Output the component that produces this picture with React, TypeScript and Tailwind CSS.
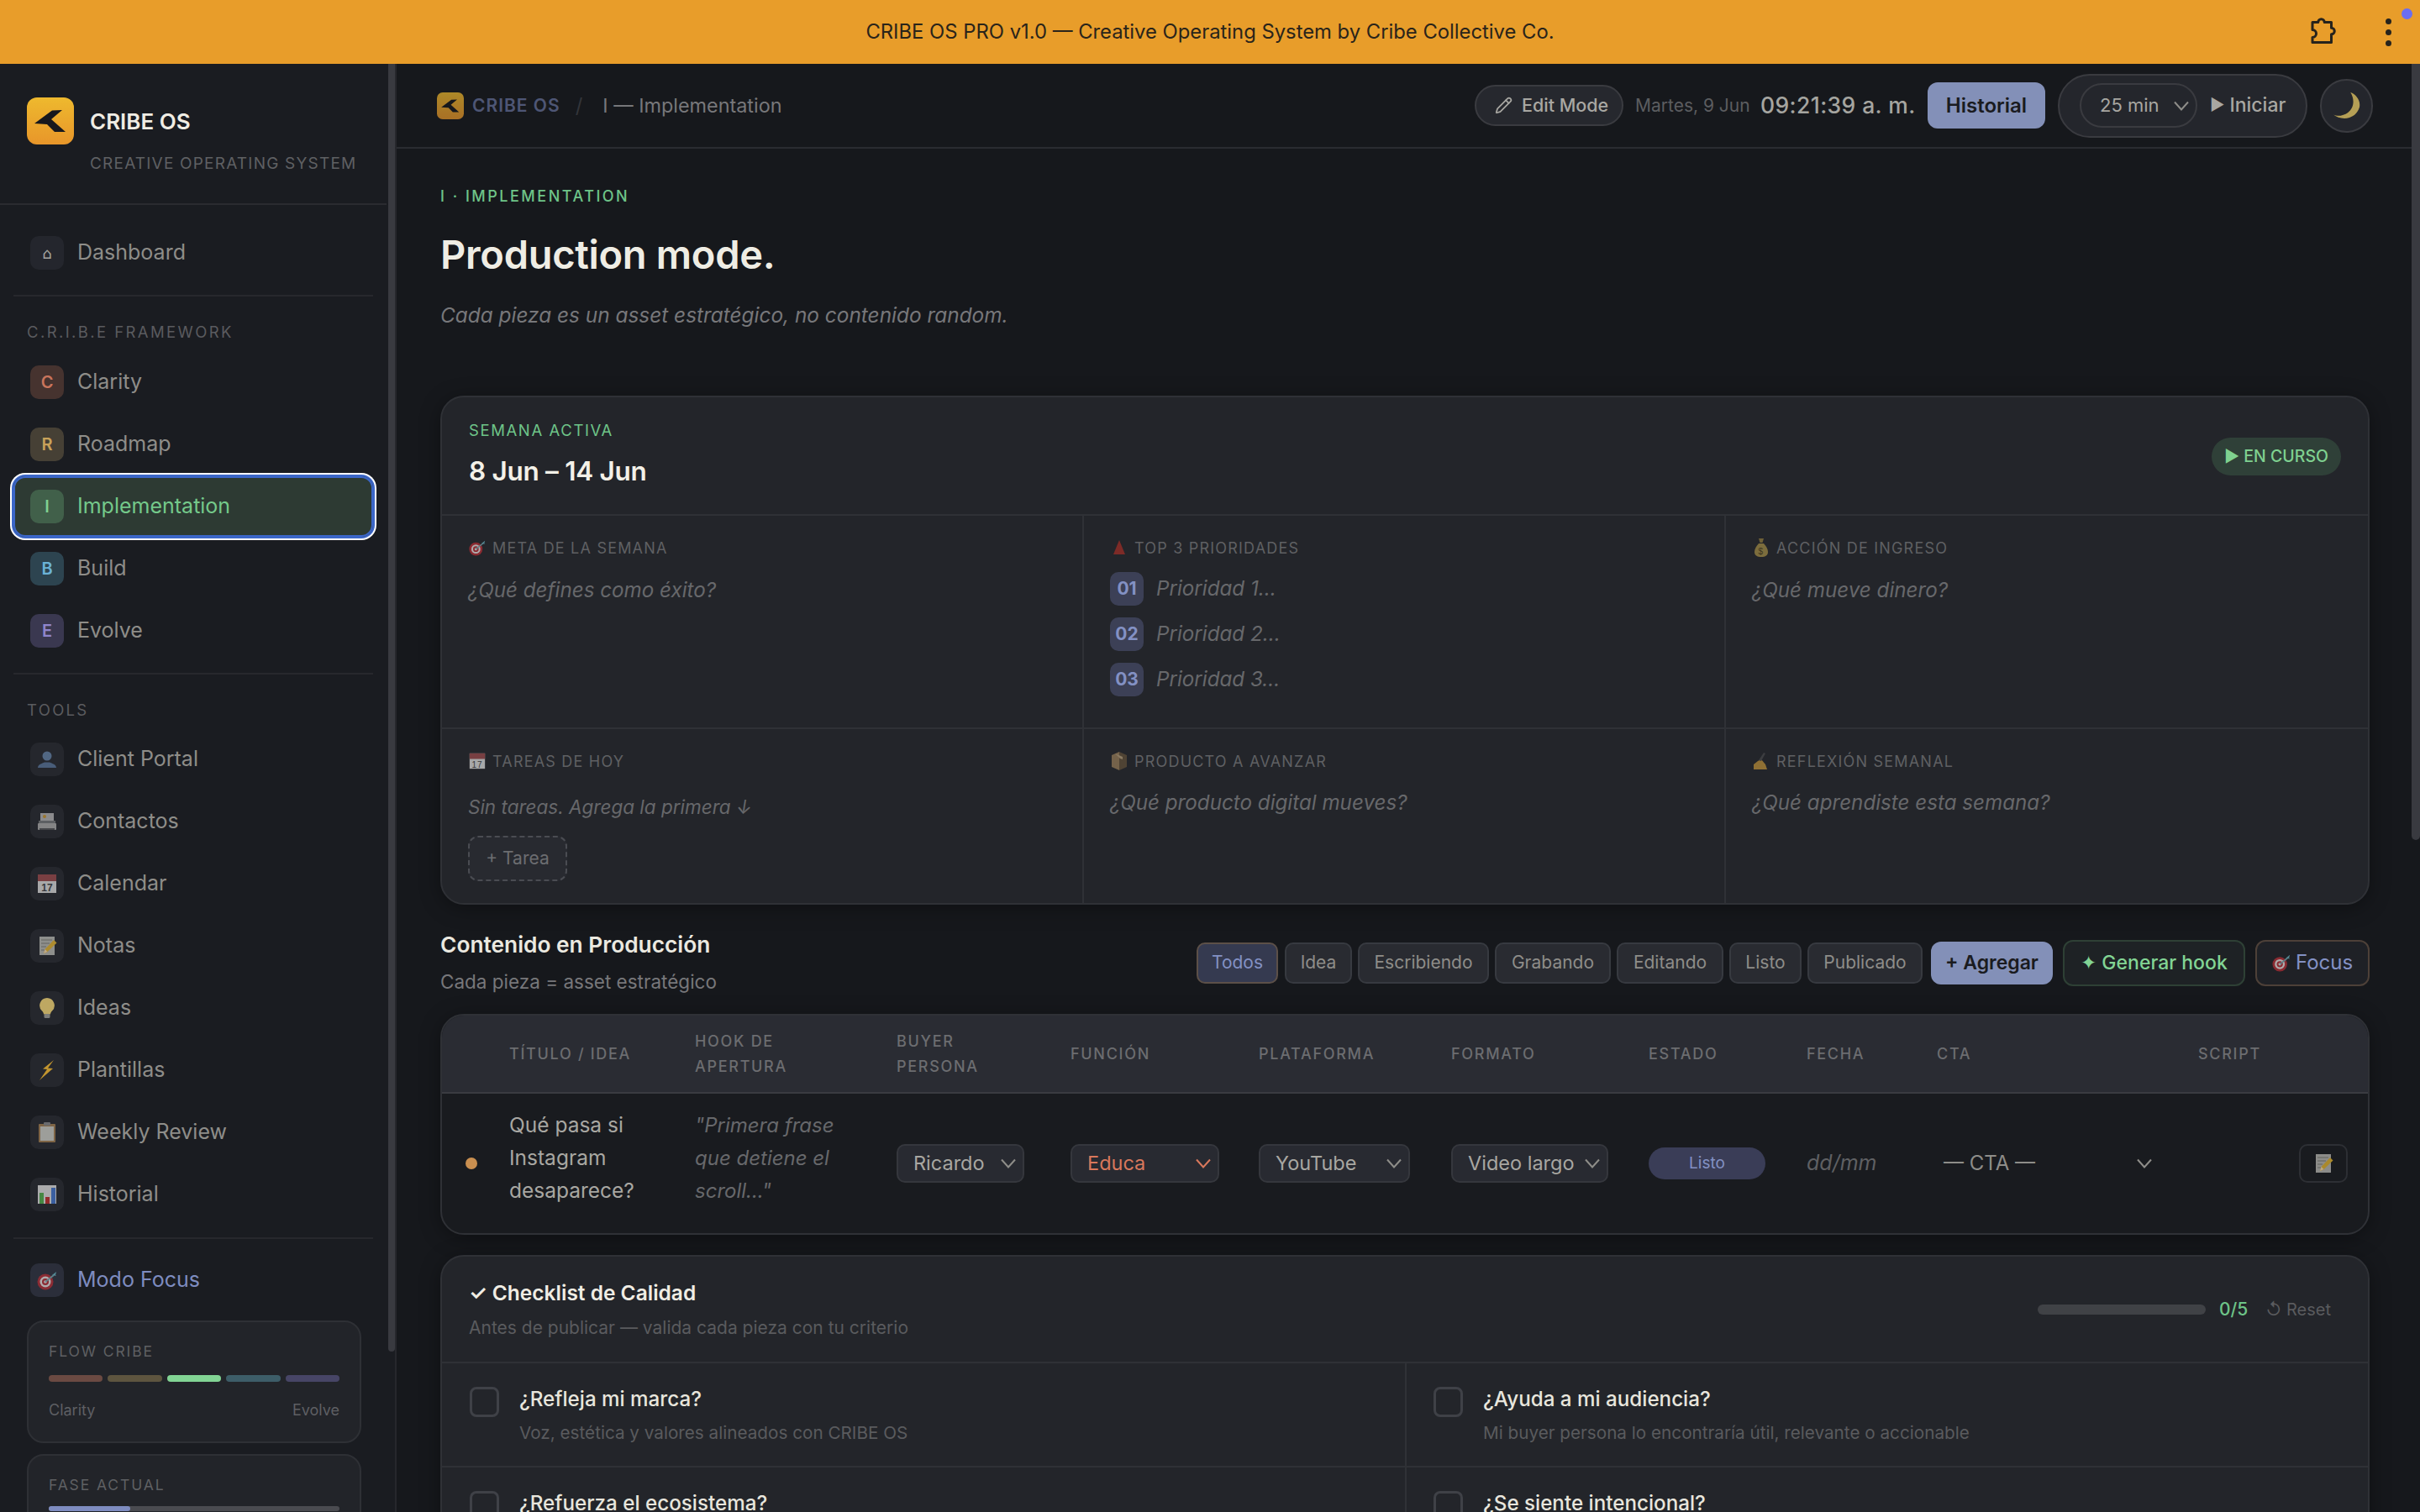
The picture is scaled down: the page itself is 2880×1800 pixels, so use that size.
import React from 'react';
import { Pencil } from 'lucide-react';

// small drawings for the emoji of the original, dimmed like the reference
const Bust = () => (
  <svg width="24" height="24" viewBox="0 0 24 24" className="opacity-80">
    <circle cx="12" cy="8" r="5.5" fill="#5d7799" />
    <path d="M1 22c0-4 5-5 8-6.500h6c3 1.500 8 2.500 8 6.500z" fill="#536b8c" />
  </svg>
);
const CardIndex = () => (
  <svg width="24" height="24" viewBox="0 0 24 24" className="opacity-80">
    <rect x="4" y="2" width="16" height="10" fill="#a5a5a5" />
    <circle cx="9" cy="6" r="2" fill="#b98a2e" />
    <rect x="2" y="11" width="20" height="4" fill="#6c6d70" />
    <rect x="1" y="14" width="22" height="8" rx="1" fill="#9c9c9c" />
    <rect x="3" y="20" width="18" height="2" fill="#4c4d50" />
  </svg>
);
const CalendarIco = ({ s = 24 }: { s?: number }) => (
  <svg width={s} height={s} viewBox="0 0 24 24" className="opacity-80">
    <rect x="1" y="1" width="22" height="22" fill="#c9c9c9" />
    <rect x="1" y="1" width="22" height="8" fill="#8e4648" />
    <text x="12" y="21" fontSize="12" textAnchor="middle" fill="#3c3d40" fontFamily="Liberation Sans">17</text>
  </svg>
);
const Memo = ({ s = 24 }: { s?: number }) => (
  <svg width={s} height={s} viewBox="0 0 24 24" className="opacity-80">
    <rect x="3" y="1" width="18" height="22" fill="#a9a9a4" />
    <path d="M5 5h13M5 9h10M5 13h6M5 17h4" stroke="#74746f" strokeWidth="1" />
    <path d="M8 21l1.500-5L20 5l3.500 3.500L12 19.500z" fill="#cfa52f" />
    <path d="M8 21l1.500-5 3 3z" fill="#e4c9a0" />
  </svg>
);
const Bulb = () => (
  <svg width="24" height="26" viewBox="0 0 24 26" className="opacity-85">
    <path d="M12 1a9 9 0 0 0-6 15.500c1.500 1.500 2 3 2 4h8c0-1 .5-2.500 2-4A9 9 0 0 0 12 1z" fill="#d9bf6c" />
    <rect x="8.500" y="20" width="7" height="5" rx="1.500" fill="#8c8c88" />
  </svg>
);
const Bolt = () => (
  <svg width="24" height="26" viewBox="0 0 24 26">
    <path d="M20 1L7 11.500l5 .5L3 25l16-14-6-.5z" fill="#c2952f" />
  </svg>
);
const Clip = () => (
  <svg width="24" height="26" viewBox="0 0 24 26" className="opacity-85">
    <rect x="2" y="3" width="20" height="22" rx="1" fill="#8e6f4a" />
    <rect x="4" y="6" width="16" height="17" fill="#b3b3ae" />
    <rect x="8" y="1" width="8" height="4" rx="1" fill="#77777a" />
  </svg>
);
const Chart = () => (
  <svg width="24" height="24" viewBox="0 0 24 24" className="opacity-85">
    <rect x="1" y="1" width="22" height="22" fill="#c3c3c3" />
    <rect x="3" y="10" width="5" height="13" fill="#4c9a48" />
    <rect x="10" y="15" width="5" height="8" fill="#a82c2c" />
    <rect x="17" y="4" width="5" height="19" fill="#3f69b5" />
  </svg>
);
const Target = ({ s = 24 }: { s?: number }) => (
  <svg width={s} height={s} viewBox="0 0 24 24" className="opacity-85">
    <circle cx="10" cy="14" r="9.500" fill="#9c2c33" />
    <circle cx="10" cy="14" r="6.500" fill="#c9c2c2" />
    <circle cx="10" cy="14" r="4" fill="#9c2c33" />
    <circle cx="10" cy="14" r="1.800" fill="#c9c2c2" />
    <path d="M10 14L20 6" stroke="#6a8f96" strokeWidth="1.800" />
    <path d="M18 6l5-4-1 4 1 1z" fill="#5c9aa6" />
  </svg>
);
const RedTri = () => (
  <svg width="16" height="20" viewBox="0 0 16 20">
    <path d="M8 1l7 17H1z" fill="#7d2b27" />
  </svg>
);
const Bag = () => (
  <svg width="18" height="24" viewBox="0 0 18 24">
    <path d="M6 1h6l-1.500 5h-3z" fill="#6f6137" />
    <path d="M6 7h6c3 3 5 7 5 10 0 4-3 6-8 6s-8-2-8-6c0-3 2-7 5-10z" fill="#7c6d3d" />
    <text x="9" y="20" fontSize="10" textAnchor="middle" fill="#3a3420" fontFamily="Liberation Sans">$</text>
  </svg>
);
const Box = () => (
  <svg width="22" height="24" viewBox="0 0 22 24">
    <path d="M11 1l9 4v14l-9 4z" fill="#4f4334" />
    <path d="M11 1L2 5v14l9 4z" fill="#74624a" />
    <path d="M6 3l9 4v3l-3-1z" fill="#8a7a62" />
  </svg>
);
const Writing = () => (
  <svg width="22" height="22" viewBox="0 0 22 22">
    <path d="M2 21v-6l5-4 4-2 5 6 2 6z" fill="#8f7034" />
    <path d="M8 10L14 1l2 1-5 9z" fill="#3c3d40" />
  </svg>
);
const Moon = () => (
  <svg width="36" height="36" viewBox="0 0 34 34">
    <path d="M21 2c6 9 4 23-11 26-3 .5-6 0-8-1 7 6 24 7 29-8C33 11 27 4 21 2z" fill="#b59f55" />
  </svg>
);
const Chev = ({ color = '#8e8d89' }: { color?: string }) => (
  <svg width="18" height="12" viewBox="0 0 18 12" fill="none" stroke={color} strokeWidth="2">
    <path d="M1 1.500l8 9 8-9" />
  </svg>
);
const Logo = ({ dim = false }: { dim?: boolean }) => (
  <svg viewBox="0 0 56 56" className={dim ? 'w-full h-full opacity-70' : 'w-full h-full'}>
    <defs>
      <linearGradient id={dim ? 'lgd' : 'lg'} x1="0" y1="0" x2="0" y2="1">
        <stop offset="0" stopColor="#eeb92e" />
        <stop offset="1" stopColor="#e8962a" />
      </linearGradient>
    </defs>
    <rect width="56" height="56" rx="12" fill={`url(#${dim ? 'lgd' : 'lg'})`} />
    <path d="M9 31L30 15.500 42 15 29 26 46 41 33 41 24 32z" fill="#17181d" />
  </svg>
);

const framework = [
  { l: 'C', name: 'Clarity', box: 'bg-[#46332f] text-[#c9755c]' },
  { l: 'R', name: 'Roadmap', box: 'bg-[#464035] text-[#c8a25a]' },
  { l: 'I', name: 'Implementation', box: 'bg-[#41604a] text-[#7fd190]', active: true },
  { l: 'B', name: 'Build', box: 'bg-[#2d4450] text-[#6bb2d6]' },
  { l: 'E', name: 'Evolve', box: 'bg-[#3a3850] text-[#8f85cc]' },
];
const tools = [
  { name: 'Client Portal', icon: <Bust /> },
  { name: 'Contactos', icon: <CardIndex /> },
  { name: 'Calendar', icon: <CalendarIco /> },
  { name: 'Notas', icon: <Memo /> },
  { name: 'Ideas', icon: <Bulb /> },
  { name: 'Plantillas', icon: <Bolt /> },
  { name: 'Weekly Review', icon: <Clip /> },
  { name: 'Historial', icon: <Chart /> },
];
const filters = [
  { t: 'Idea', w: 'w-[80px]' },
  { t: 'Escribiendo', w: 'w-[156px]' },
  { t: 'Grabando', w: 'w-[138px]' },
  { t: 'Editando', w: 'w-[127px]' },
  { t: 'Listo', w: 'w-[86px]' },
  { t: 'Publicado', w: 'w-[137px]' },
];

const NavRow = ({ icon, label, box, text, active }: { icon: React.ReactNode; label: string; box: string; text?: string; active?: boolean }) => (
  <div
    className={`h-[72px] mx-4 pl-5 flex items-center gap-4 rounded-[14px] ${
      active ? 'bg-[#2d3a33] shadow-[inset_0_0_0_2px_#3b66c8,0_0_0_2px_#3b66c8,0_0_0_4px_#ffffff]' : ''
    }`}
  >
    <div className={`w-10 h-10 rounded-[10px] flex items-center justify-center text-[20px] font-semibold ${box}`}>{icon}</div>
    <span className={`text-[25px] ${text ?? 'text-[#8e8d89]'}`}>{label}</span>
  </div>
);

const Sidebar = () => (
  <aside className="relative w-[472px] shrink-0 bg-[#1a1c21] border-r-2 border-[#26272c] overflow-hidden">
    {/* scrollbar */}
    <div className="absolute top-0 right-0 w-2 h-[1533px] bg-[#393a40] rounded-b-md" />
    <div className="w-[460px]">
      <div className="h-[168px] pt-10 pl-8 border-b-2 border-[#2a2b30]">
        <div className="flex items-center gap-[19px]">
          <div className="w-14 h-14"><Logo /></div>
          <span className="text-[26px] font-semibold text-[#f0ede4]">CRIBE OS</span>
        </div>
        <div className="ml-[75px] mt-[10px] text-[19px] leading-[26px] tracking-[1.200px] text-[#5f6063]">CREATIVE OPERATING SYSTEM</div>
      </div>
      <div className="mt-[21px]">
        <NavRow icon={<span className="font-['DejaVu_Sans'] text-[18px] font-normal">⌂</span>} label="Dashboard" box="bg-[#24262d] text-[#a5a5a0]" />
      </div>
      <div className="h-[2px] mx-4 mt-[14px] bg-[#27282d]" />
      <div className="pl-8 mt-[30px] mb-[12px] text-[18.500px] leading-[24px] tracking-[2.400px] text-[#5a5b5f]">C.R.I.B.E FRAMEWORK</div>
      <div className="flex flex-col gap-[2px]">
        {framework.map((f) => (
          <NavRow key={f.l} icon={f.l} label={f.name} box={f.box} active={f.active} text={f.active ? 'text-[#74c98a]' : undefined} />
        ))}
      </div>
      <div className="h-[2px] mx-4 mt-[14px] bg-[#27282d]" />
      <div className="pl-8 mt-[30px] mb-[11px] text-[18.500px] leading-[24px] tracking-[2.300px] text-[#5a5b5f]">TOOLS</div>
      <div className="flex flex-col gap-[2px]">
        {tools.map((t) => (
          <NavRow key={t.name} icon={t.icon} label={t.name} box="bg-[#25272d]" />
        ))}
      </div>
      <div className="h-[2px] mx-4 mt-[15px] bg-[#27282d]" />
      <div className="mt-[13px]">
        <NavRow icon={<Target />} label="Modo Focus" box="bg-[#2b2e3a]" text="text-[#7e8cc0]" />
      </div>
      <div className="mx-8 mt-[12px] h-[146px] w-[398px] rounded-[20px] border-2 border-[#2e3035] bg-[#222429] px-[24px] pt-[23px]">
        <div className="text-[17.500px] leading-[24px] tracking-[1.900px] text-[#5f6063]">FLOW CRIBE</div>
        <div className="mt-[16px] flex gap-[6px]">
          <div className="h-2 flex-1 rounded-full bg-[#6b4a42]" />
          <div className="h-2 flex-1 rounded-full bg-[#5e553f]" />
          <div className="h-2 flex-1 rounded-full bg-[#82d494]" />
          <div className="h-2 flex-1 rounded-full bg-[#3d5d68]" />
          <div className="h-2 flex-1 rounded-full bg-[#474566]" />
        </div>
        <div className="mt-[22px] flex justify-between text-[18px] leading-[24px] text-[#5e5f63]">
          <span>Clarity</span>
          <span>Evolve</span>
        </div>
      </div>
      <div className="mx-8 mt-[13px] h-[146px] w-[398px] rounded-[20px] border-2 border-[#2e3035] bg-[#222429] px-[24px] pt-[23px]">
        <div className="text-[17.500px] leading-[24px] tracking-[1.900px] text-[#5f6063]">FASE ACTUAL</div>
        <div className="mt-[13px] h-[6px] rounded-full bg-[#4a4b50]">
          <div className="h-[6px] w-[97px] rounded-full bg-[#7e8cc0]" />
        </div>
      </div>
    </div>
  </aside>
);

const Header = () => (
  <header className="h-[101px] shrink-0 pl-[48px] pr-[56px] flex items-center justify-between border-b-2 border-[#2a2c31]">
    <div className="flex items-center">
      <div className="w-8 h-8"><Logo dim /></div>
      <span className="ml-[10px] text-[21px] font-semibold tracking-[1px] text-[#4e5675]">CRIBE OS</span>
      <span className="ml-[18px] text-[24px] text-[#33353a]">/</span>
      <span className="ml-[24px] text-[23.400px] text-[#77777a]">I — Implementation</span>
    </div>
    <div className="flex items-center">
      <button className="h-[49px] w-[177px] pl-[22px] flex items-center gap-[11px] rounded-full border-2 border-[#3a3b40] bg-[#26282e] text-[21.500px] font-medium text-[#a8a7a2]">
        <Pencil size={21} strokeWidth={2} />
        Edit Mode
      </button>
      <span className="ml-[14px] w-[136px] text-[21px] text-[#5c5d60] whitespace-nowrap">Martes, 9 Jun</span>
      <span className="ml-[13px] w-[183px] text-[26.500px] font-medium tracking-[0.400px] text-[#a5a5a0] whitespace-nowrap">09:21:39 a. m.</span>
      <button className="ml-[16px] h-[55px] w-[140px] rounded-[12px] bg-[#8390b8] text-[24px] font-semibold text-[#1a1b20]">Historial</button>
      <div className="ml-[15px] h-[76px] w-[297px] pl-[24px] flex items-center rounded-full border-2 border-[#3a3b40] bg-[#24262c]">
        <div className="h-[53px] w-[140px] pl-[22px] pr-[8px] flex items-center justify-between rounded-full border-2 border-[#3a3b40] text-[22px] text-[#a8a7a2]">
          25 min
          <Chev />
        </div>
        <span className="ml-[15px] text-[19px] text-[#a8a7a2]">▶</span>
        <span className="ml-[6px] text-[23px] font-medium text-[#a8a7a2]">Iniciar</span>
      </div>
      <div className="ml-[15px] w-[63px] h-[64px] flex items-center justify-center rounded-full border-2 border-[#3a3b40] bg-[#24262c]">
        <Moon />
      </div>
    </div>
  </header>
);

const CellLabel = ({ icon, children }: { icon: React.ReactNode; children: React.ReactNode }) => (
  <div className="h-6 flex items-center gap-[7px] text-[18px] tracking-[1.200px] text-[#5f6063]">
    <span className="w-[22px] flex justify-center">{icon}</span>
    {children}
  </div>
);
const Ph = ({ children }: { children: React.ReactNode }) => (
  <div className="text-[24.200px] leading-[36px] italic text-[#67686b]">{children}</div>
);

const WeekCard = () => (
  <section className="mt-[78px] rounded-[28px] border-2 border-[#2f3136] bg-[#23252a] shadow-[0_4px_24px_rgba(0,0,0,0.35)] overflow-hidden">
    <div className="h-[141px] pl-[32px] pr-[32px] pt-[27px] flex justify-between border-b-2 border-[#2f3136]">
      <div>
        <div className="text-[18.500px] leading-[24px] tracking-[1.600px] text-[#6ec488]">SEMANA ACTIVA</div>
        <div className="mt-[17px] text-[31.500px] leading-[40px] font-semibold tracking-[-0.300px] text-[#f3f1e8]">8 Jun – 14 Jun</div>
      </div>
      <div className="mt-[21px] h-[45px] w-[154px] flex items-center justify-center rounded-full bg-[#2f4038] text-[19.500px] font-medium text-[#7fd190]">▶ EN CURSO</div>
    </div>
    <div className="grid grid-cols-3">
      <div className="h-[254px] pl-[31px] pt-[26px] border-r-2 border-b-2 border-[#2f3136]">
        <CellLabel icon={<Target s={20} />}>META DE LA SEMANA</CellLabel>
        <div className="mt-[21px]"><Ph>¿Qué defines como éxito?</Ph></div>
      </div>
      <div className="h-[254px] pl-[31px] pt-[26px] border-r-2 border-b-2 border-[#2f3136]">
        <CellLabel icon={<RedTri />}>TOP 3 PRIORIDADES</CellLabel>
        <div className="mt-[17px] flex flex-col gap-[14px]">
          {['Prioridad 1...', 'Prioridad 2...', 'Prioridad 3...'].map((p, i) => (
            <div key={p} className="flex items-center gap-[15px]">
              <div className="w-10 h-10 rounded-[10px] bg-[#3c4056] flex items-center justify-center text-[21px] font-bold text-[#8391c4]">{`0${i + 1}`}</div>
              <Ph>{p}</Ph>
            </div>
          ))}
        </div>
      </div>
      <div className="h-[254px] pl-[31px] pt-[26px] border-b-2 border-[#2f3136]">
        <CellLabel icon={<Bag />}>ACCIÓN DE INGRESO</CellLabel>
        <div className="mt-[21px]"><Ph>¿Qué mueve dinero?</Ph></div>
      </div>
      <div className="h-[207px] pl-[31px] pt-[26px] border-r-2 border-[#2f3136]">
        <CellLabel icon={<CalendarIco s={20} />}>TAREAS DE HOY</CellLabel>
        <div className="mt-[25px] text-[22.500px] leading-[36px] italic text-[#67686b]">Sin tareas. Agrega la primera ↓</div>
        <div className="mt-[16px] h-[54px] w-[118px] flex items-center justify-center rounded-[12px] border-2 border-dashed border-[#4a4c52] bg-[#282a30] text-[21px] text-[#6c6d70]">+ Tarea</div>
      </div>
      <div className="h-[207px] pl-[31px] pt-[26px] border-r-2 border-[#2f3136]">
        <CellLabel icon={<Box />}>PRODUCTO A AVANZAR</CellLabel>
        <div className="mt-[20px]"><Ph>¿Qué producto digital mueves?</Ph></div>
      </div>
      <div className="h-[207px] pl-[31px] pt-[26px]">
        <CellLabel icon={<Writing />}>REFLEXIÓN SEMANAL</CellLabel>
        <div className="mt-[20px]"><Ph>¿Qué aprendiste esta semana?</Ph></div>
      </div>
    </div>
  </section>
);

const Toolbar = () => (
  <div className="mt-[28px] h-[82px] flex items-center justify-between">
    <div className="self-start pt-[2px]">
      <div className="text-[26.300px] leading-[36px] font-semibold text-[#ebe9e0]">Contenido en Producción</div>
      <div className="mt-[11px] text-[22.500px] leading-[30px] text-[#77777a]">Cada pieza = asset estratégico</div>
    </div>
    <div className="flex items-center">
      <button className="h-[49px] w-[97px] rounded-[10px] border-2 border-[#5c5048] bg-[#353a50] text-[21px] text-[#8391c4]">Todos</button>
      <div className="ml-[8px] flex gap-[7px]">
        {filters.map((f) => (
          <button key={f.t} className={`h-[49px] ${f.w} rounded-[10px] border-2 border-[#373a40] bg-[#292b31] text-[21px] text-[#8e8d89]`}>{f.t}</button>
        ))}
      </div>
      <button className="ml-[10px] h-[51px] w-[145px] rounded-[12px] bg-[#8390b8] text-[23px] font-semibold text-[#1a1b20]">+ Agregar</button>
      <button className="ml-[12px] h-[55px] w-[217px] rounded-[12px] border-2 border-[#2e4035] bg-[#1e2225] text-[23px] font-medium text-[#82d494]">✦ Generar hook</button>
      <button className="ml-[12px] h-[55px] w-[136px] flex items-center justify-center gap-[6px] rounded-[12px] border-2 border-[#4d4038] bg-[#1f2126] text-[24px] text-[#8391c4]">
        <Target s={22} />
        Focus
      </button>
    </div>
  </div>
);

const Sel = ({ w, label, color }: { w: string; label: string; color?: string }) => (
  <div className={`${w} h-[46px] pl-[18px] pr-[8px] flex items-center justify-between rounded-[10px] border-2 border-[#35373d] bg-[#282a31] text-[23.500px] ${color ?? 'text-[#a8a7a2]'}`}>
    {label}
    <Chev color={color ? '#d8785c' : '#8e8d89'} />
  </div>
);

const ContentTable = () => (
  <section className="mt-[20px] rounded-[28px] border-2 border-[#2f3136] bg-[#191b1f] shadow-[0_4px_24px_rgba(0,0,0,0.35)] overflow-hidden">
    <div className="h-[93px] grid grid-cols-[80px_221px_240px_207px_224px_229px_235px_188px_155px_311px_1fr] items-center border-b-2 border-[#3a3b41] bg-[#2a2c33] text-[18px] leading-[30px] font-medium tracking-[1.700px] text-[#6c6d70]">
      <div />
      <div>TÍTULO / IDEA</div>
      <div>HOOK DE<br />APERTURA</div>
      <div>BUYER<br />PERSONA</div>
      <div>FUNCIÓN</div>
      <div>PLATAFORMA</div>
      <div>FORMATO</div>
      <div>ESTADO</div>
      <div>FECHA</div>
      <div>CTA</div>
      <div>SCRIPT</div>
    </div>
    <div className="h-[166px] grid grid-cols-[80px_221px_240px_207px_224px_229px_235px_188px_155px_311px_1fr] items-center">
      <div className="pl-[28px]"><div className="w-[14px] h-[14px] rounded-full bg-[#c98f50]" /></div>
      <div className="self-start pt-[18px] text-[24.500px] leading-[39px] text-[#a8a7a2]">Qué pasa si<br />Instagram<br />desaparece?</div>
      <div className="self-start pt-[18px] text-[24px] leading-[39px] italic text-[#67686b]">"Primera frase<br />que detiene el<br />scroll..."</div>
      <Sel w="w-[152px]" label="Ricardo" />
      <Sel w="w-[177px]" label="Educa" color="text-[#d8785c]" />
      <Sel w="w-[180px]" label="YouTube" />
      <Sel w="w-[187px]" label="Video largo" />
      <div className="w-[139px] h-[38px] rounded-full bg-[#3a3d57] flex items-center justify-center text-[19px] text-[#8391c4]">Listo</div>
      <div className="text-[25px] italic text-[#5f6063]">dd/mm</div>
      <div className="w-[256px] pl-[8px] flex items-center justify-between text-[24px] text-[#8e8d89]">
        — CTA —
        <Chev />
      </div>
      <div className="flex justify-end pr-[24px]">
        <div className="w-[58px] h-[46px] flex items-center justify-center rounded-[10px] border-2 border-[#2d2f34]"><Memo s={24} /></div>
      </div>
    </div>
  </section>
);

const CheckItem = ({ title, desc, last }: { title: string; desc?: string; last?: boolean }) => (
  <div className={`h-[124px] flex pt-[28px] ${last ? 'pl-[32px]' : 'pl-[33px] border-r-2 border-[#2f3136]'}`}>
    <div className="w-[35px] h-[36px] rounded-[8px] border-[3px] border-[#3f4147]" />
    <div className="ml-[24px]">
      <div className="h-[30px] flex items-center text-[24.200px] font-medium text-[#e8e6dd]">{title}</div>
      {desc && <div className="mt-[10px] text-[20.700px] leading-[30px] text-[#5a5b5e]">{desc}</div>}
    </div>
  </div>
);

const Checklist = () => (
  <section className="mt-[24px] rounded-[28px] border-2 border-[#2f3136] bg-[#23252a] shadow-[0_4px_24px_rgba(0,0,0,0.35)] overflow-hidden">
    <div className="h-[127px] pl-[32px] pr-[44px] flex items-center justify-between border-b-2 border-[#2f3136]">
      <div>
        <div className="text-[24.500px] leading-[36px] font-semibold text-[#f0ede4]">✓ Checklist de Calidad</div>
        <div className="mt-[9px] text-[21px] leading-[30px] text-[#5a5b5e]">Antes de publicar — valida cada pieza con tu criterio</div>
      </div>
      <div className="flex items-center">
        <div className="w-[200px] h-[12px] rounded-full bg-[#404246]" />
        <span className="ml-[16px] text-[21px] font-medium text-[#6ec488]">0/5</span>
        <span className="ml-[21px] text-[20px] text-[#5a5b5e]">↺ Reset</span>
      </div>
    </div>
    <div className="grid grid-cols-[1148px_1fr] [&>div:nth-child(-n+2)]:border-b-2 [&>div]:border-[#2f3136]">
      <CheckItem title="¿Refleja mi marca?" desc="Voz, estética y valores alineados con CRIBE OS" />
      <CheckItem title="¿Ayuda a mi audiencia?" desc="Mi buyer persona lo encontraría útil, relevante o accionable" last />
      <CheckItem title="¿Refuerza el ecosistema?" />
      <CheckItem title="¿Se siente intencional?" last />
    </div>
  </section>
);

export default function App() {
  return (
    <div className="relative w-[2880px] h-[1800px] overflow-hidden flex flex-col bg-[#16181c] font-[Inter,sans-serif]">
      {/* top banner */}
      <div className="relative h-[76px] shrink-0 bg-[#e89d2a] flex items-center justify-center text-[23.800px] text-[#2a241a]">
        CRIBE OS PRO v1.0 — Creative Operating System by Cribe Collective Co.
        <svg className="absolute left-[2746px] top-[19px]" width="36" height="36" viewBox="0 0 24 24" fill="none" stroke="#26231c" strokeWidth="2" strokeLinejoin="round">
          <path d="M4 5h4.500a2.500 2.500 0 0 1 5 0H19v4.500a2.500 2.500 0 0 1 0 5V21H4v-4a2.800 2.800 0 0 0 0-6z" />
        </svg>
        <div className="absolute left-[2839px] top-[22px] flex flex-col gap-[6px]">
          <div className="w-[7px] h-[7px] rounded-full bg-[#26231c]" />
          <div className="w-[7px] h-[7px] rounded-full bg-[#26231c]" />
          <div className="w-[7px] h-[7px] rounded-full bg-[#26231c]" />
        </div>
        <div className="absolute left-[2858px] top-[10px] w-[13px] h-[13px] rounded-full bg-[#6b6ef0]" />
      </div>
      <div className="flex flex-1 min-h-0">
        <Sidebar />
        <main className="relative flex-1 min-w-0 flex flex-col bg-[#16181c]">
          <div className="absolute top-0 right-0 w-[10px] h-[924px] bg-[#393a40] rounded-b-md" />
          <Header />
          <div className="pl-[52px] pr-[60px] pt-[45px]">
            <div className="text-[18px] leading-[24px] font-medium tracking-[2.500px] text-[#6ec488]">I · IMPLEMENTATION</div>
            <h1 className="mt-[27px] text-[47px] leading-[60px] font-semibold tracking-[-0.300px] text-[#efede4]">Production mode.</h1>
            <p className="mt-[24px] text-[24.400px] leading-[36px] italic text-[#77777a]">Cada pieza es un asset estratégico, no contenido random.</p>
            <WeekCard />
            <Toolbar />
            <ContentTable />
            <Checklist />
          </div>
        </main>
      </div>
    </div>
  );
}
